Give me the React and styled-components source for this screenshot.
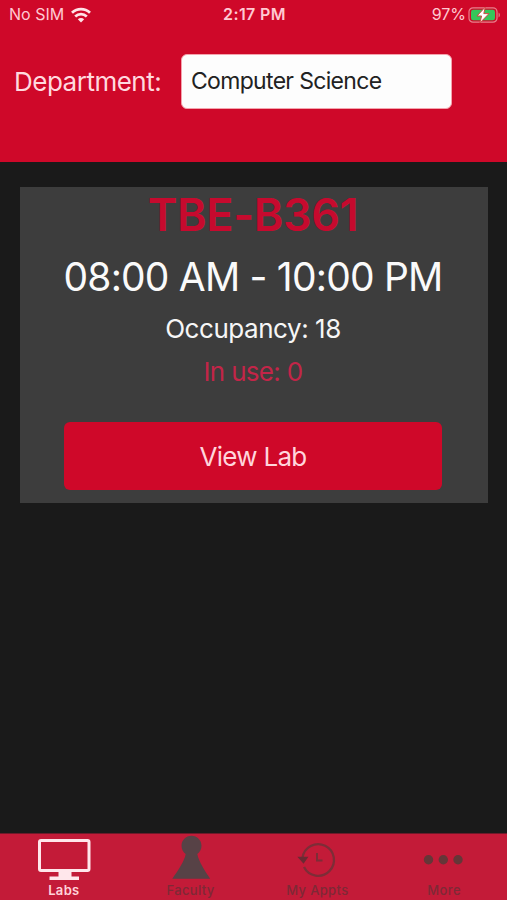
import React from 'react';
import styled, { createGlobalStyle } from 'styled-components';

const GlobalStyle = createGlobalStyle`
  * { box-sizing: border-box; }
  body { margin: 0; background: #1a1a1a; }
`;

const Screen = styled.div`
  display: flex;
  flex-direction: column;
  height: 900px;
  width: 507px;
  overflow: hidden;
  background: #1a1a1a;
  font-family: Inter, 'Liberation Sans', sans-serif;
`;

const Header = styled.header`
  height: 162px;
  flex: none;
  background: #cf0829;
`;

const StatusBar = styled.div`
  display: grid;
  grid-template-columns: 1fr auto 1fr;
  align-items: center;
  height: 29px;
  padding: 0 7px 0 9px;
  font-size: 16px;
  line-height: 29px;
  color: #ffc9d2;
`;

const StatusGroup = styled.div`
  display: flex;
  align-items: center;
  justify-content: ${(p) => (p.$end ? 'flex-end' : 'flex-start')};
  gap: ${(p) => (p.$end ? '2px' : '7px')};
`;

const Clock = styled.div`
  font-weight: 600;
  letter-spacing: 0.4px;
`;

const FilterRow = styled.div`
  display: grid;
  grid-template-columns: 167px 271px;
  align-items: center;
  margin-top: 25px;
  padding-left: 14px;
  height: 55px;
`;

const FieldLabel = styled.label`
  font-size: 26px;
  letter-spacing: -0.5px;
  color: #ffd9df;
`;

const Select = styled.div`
  height: 55px;
  padding-left: 9px;
  border: 1px solid #f4a3ad;
  border-radius: 6px;
  background: #fdfdfd;
  color: #222;
  font-size: 23px;
  line-height: 52px;
  letter-spacing: -0.68px;
`;

const Content = styled.main`
  flex: 1;
  padding: 25px 19px 0 20px;
`;

const LabCard = styled.section`
  display: flex;
  flex-direction: column;
  align-items: center;
  height: 316px;
  padding-right: 2px;
  background: #3d3d3d;
  white-space: nowrap;
`;

const LabName = styled.h2`
  margin: 0;
  height: 56px;
  line-height: 56px;
  font-size: 45px;
  font-weight: 600;
  letter-spacing: -0.4px;
  color: #c60a2e;
`;

const Hours = styled.div`
  height: 68px;
  line-height: 68px;
  font-size: 39px;
  font-weight: 400;
  letter-spacing: -0.8px;
  color: #fafafa;
`;

const Stat = styled.div`
  height: ${(p) => (p.$accent ? '51px' : '35px')};
  line-height: ${(p) => (p.$accent ? '51px' : '35px')};
  font-size: 26px;
  letter-spacing: ${(p) => (p.$accent ? '-0.7px' : '-0.45px')};
  color: ${(p) => (p.$accent ? '#c32548' : '#f6f6f6')};
`;

const ViewButton = styled.button`
  width: 378px;
  height: 68px;
  margin: 25px 0 0;
  padding: 1px 0 0;
  border: 0;
  border-radius: 6px;
  background: #cf0829;
  color: #ffd5dc;
  font: 400 26px/67px Inter, 'Liberation Sans', sans-serif;
  letter-spacing: -0.7px;
`;

const TabBar = styled.nav`
  display: grid;
  grid-template-columns: repeat(4, 1fr);
  flex: none;
  height: 67px;
  border-top: 1px solid #6f1a2a;
  background: #c31b38;
`;

const Tab = styled.div`
  display: flex;
  flex-direction: column;
  align-items: center;
  padding-left: 1px;
  color: ${(p) => (p.$active ? '#ffd3da' : '#7e2936')};
  font-size: 13px;
  font-weight: ${(p) => (p.$active ? 600 : 500)};
  letter-spacing: 0.35px;
  line-height: 16px;
  white-space: nowrap;
`;

const TabIcon = styled.svg`
  display: block;
  width: 60px;
  height: 48px;
`;

const WifiIcon = () => (
  <svg width="20" height="16" viewBox="0 0 20 16">
    <g fill="none" stroke="#ffe3e7" strokeWidth="2.8">
      <path d="M1 5.8C6.2.9 13.8.9 19 5.8" />
      <path d="M4.2 9.5c3.4-3.1 8.2-3.1 11.6 0" />
    </g>
    <path d="M6.8 12.3c1.9-1.6 4.5-1.6 6.4 0L10 15.5z" fill="#ffe3e7" />
  </svg>
);

const BatteryIcon = () => (
  <svg width="32" height="16" viewBox="0 0 32 16">
    <rect x="1" y=".8" width="28" height="14.4" rx="4" fill="none" stroke="#e8808c" strokeWidth="1.2" />
    <rect x="3" y="2.8" width="24" height="10.4" rx="2.2" fill="#35c75a" />
    <path d="M30.5 5.5c2 .8 2 4.2 0 5z" fill="#e06a79" />
    <path d="M17.3 0 9 9h4.6l-1.8 7L21 6.6h-5.2z" fill="#fff" stroke="#cf4a45" strokeWidth="1" />
  </svg>
);

const MonitorIcon = () => (
  <TabIcon viewBox="0 0 60 48">
    <rect x="5.5" y="6.5" width="49.5" height="30" rx="1.5" fill="none" stroke="#ffe7eb" strokeWidth="3" />
    <path d="M24.5 37.5h13v5h7.5V46H15.5v-3.5h9z" fill="#ffe7eb" />
  </TabIcon>
);

const PawnIcon = () => (
  <TabIcon viewBox="0 0 60 48">
    <path
      d="M30.5 1.8c-5.7 0-10 4.5-10 10 0 3.7 1.7 6.3 4.2 8.3-1.4 7.5-7.6 16.5-13.4 24.6h37.9C43.5 36.6 37.8 27.6 36.3 20.1c2.5-2 4.2-4.6 4.2-8.3 0-5.5-4.3-10-10-10z"
      fill="#574246"
    />
  </TabIcon>
);

const HistoryIcon = () => (
  <TabIcon viewBox="0 0 60 48" fill="none" stroke="#7d2d37" strokeWidth="2.3">
    <path d="M15.5 24A15.8 15.8 0 1 1 17 33" />
    <path d="M30 19v7.5h5.5" strokeWidth="2" />
    <path d="M12 23.5h8l-3.5 5z" fill="#6b2a33" stroke="#6b2a33" strokeWidth="1.5" />
  </TabIcon>
);

const MoreIcon = () => (
  <TabIcon viewBox="0 0 60 48" fill="#653638">
    <circle cx="14.5" cy="25.7" r="4.7" />
    <circle cx="29.3" cy="25.7" r="4.7" />
    <circle cx="44" cy="25.7" r="4.7" />
  </TabIcon>
);

const tabs = [
  { label: 'Labs', Icon: MonitorIcon, active: true },
  { label: 'Faculty', Icon: PawnIcon },
  { label: 'My Appts', Icon: HistoryIcon },
  { label: 'More', Icon: MoreIcon },
];

export default function App() {
  return (
    <Screen>
      <GlobalStyle />
      <Header>
        <StatusBar>
          <StatusGroup>
            No SIM <WifiIcon />
          </StatusGroup>
          <Clock>2:17 PM</Clock>
          <StatusGroup $end>
            97% <BatteryIcon />
          </StatusGroup>
        </StatusBar>
        <FilterRow>
          <FieldLabel>Department:</FieldLabel>
          <Select>Computer Science</Select>
        </FilterRow>
      </Header>
      <Content>
        <LabCard>
          <LabName>TBE-B361</LabName>
          <Hours>08:00 AM - 10:00 PM</Hours>
          <Stat>Occupancy: 18</Stat>
          <Stat $accent>In use: 0</Stat>
          <ViewButton>View Lab</ViewButton>
        </LabCard>
      </Content>
      <TabBar>
        {tabs.map(({ label, Icon, active }) => (
          <Tab key={label} $active={active}>
            <Icon />
            {label}
          </Tab>
        ))}
      </TabBar>
    </Screen>
  );
}
